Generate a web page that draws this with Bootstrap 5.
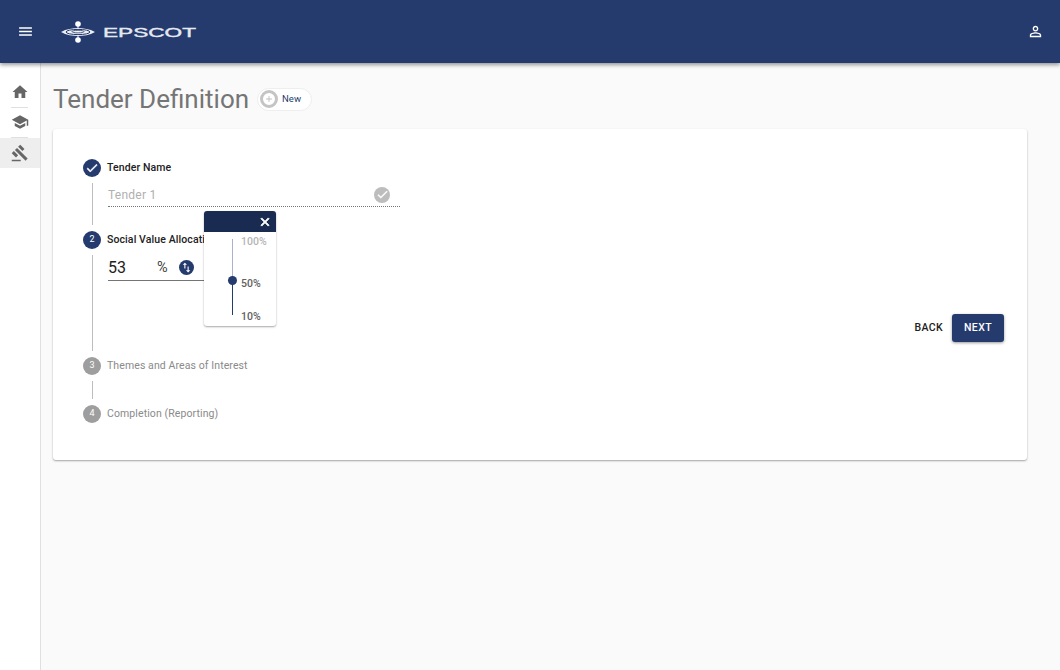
<!DOCTYPE html>
<html lang="en">
<head>
<meta charset="utf-8">
<title>Tender Definition</title>
<link href="https://cdn.jsdelivr.net/npm/bootstrap@5.3.0/dist/css/bootstrap.min.css" rel="stylesheet">
<style>
html,body{height:100%;overflow:hidden}
body{font-family:Roboto,"Liberation Sans",sans-serif;background:#fafafa;color:#212121}
.app-top{height:63px;background:#253b6e;box-shadow:0 2px 4px rgba(0,0,0,.4);position:relative;z-index:3;padding:0 16px 0 17px}
.top-ico{width:17px;height:17px;fill:#fff;display:block}
.brand-svg{display:block;margin-left:18px}
.brand-word{font-family:"Liberation Sans",sans-serif;font-size:12.5px;fill:#e6e9f0;stroke:#e6e9f0;stroke-width:.35px}
.app-shell{height:607px}
.side-rail{width:41px;flex:none;background:#fff;border-right:1px solid #e0e0e0;padding-top:14px}
.rail-item{height:30px;display:flex;align-items:center;justify-content:center}
.rail-item svg{width:18px;height:18px;fill:#666}
.rail-item.is-short{height:28px;padding-bottom:1px}
.rail-item.is-on{background:#eee}
.rail-sep{height:1px;background:#e0e0e0;margin:0 12px 0 11px}
.rail-sep.is-low{margin-top:1px}
.page-area{padding:21px 33px 0 12px;min-width:0}
.page-title{font-size:26px;line-height:30px;font-weight:400;color:#757575;margin:0}
.new-pill{width:55px;height:23px;border:1px solid #eee;border-radius:12px;background:#fff;padding:0 0 0 2px;margin-left:8px;font-size:9.5px;font-weight:400;color:#253b6e;gap:4px}
.new-pill i{width:18px;height:18px;flex:none;border-radius:50%;border:3px solid #c4c4c4;display:flex;align-items:center;justify-content:center}
.new-pill svg{width:10px;height:10px;fill:#bdbdbd}
.new-word{padding-top:1px}
.tender-card{height:331px;margin-top:15px;border:0;border-radius:3px;box-shadow:0 1px 2px rgba(0,0,0,.35);padding:30px 23px 0 30px}
.step-head{display:flex;align-items:center;height:18px;font-size:10.5px;font-weight:500;color:#212121;white-space:nowrap;letter-spacing:.1px}
.step-dot{width:18px;height:18px;flex:none;border-radius:50%;background:#253b6e;color:#fff;font-size:9px;font-weight:400;letter-spacing:0;display:flex;align-items:center;justify-content:center;margin-right:6px}
.step-dot svg{width:14px;height:14px;fill:#fff;stroke:#fff;stroke-width:1px}
.step-head.is-todo{color:#8a8a8a;font-weight:400;letter-spacing:.1px}
.step-head.is-todo .step-dot{background:#9e9e9e}
.step-body{margin:6px 0 6px 9px;border-left:1px solid #bdbdbd;padding-left:15px}
.name-field{width:292px;height:24px;border-bottom:1px dotted #757575;font-size:12px;letter-spacing:.25px;color:#b0b0b0}
.done-mark{width:16px;height:16px;border-radius:50%;background:#bdbdbd;display:flex;align-items:center;justify-content:center;margin-right:10px}
.done-mark svg{width:13px;height:13px;fill:#fff;stroke:#fff;stroke-width:1px}
.pct-field{width:130px;height:26px;border-bottom:1px solid #757575;font-size:16px;color:#212121;position:relative}
.pct-num{width:49px}
.pct-sign{font-size:14.5px;color:#424242;width:22px}
.swap-mark{width:15px;height:15px;border-radius:50%;background:#253b6e;display:flex;align-items:center;justify-content:center}
.swap-mark svg{width:13px;height:13px;fill:#fff}
.slide-pop{position:absolute;left:96px;top:-44px;width:72px;height:115px;background:#fff;border-radius:3px;box-shadow:0 1px 2px rgba(0,0,0,.35);overflow:hidden;z-index:2}
.slide-top{height:21px;background:#1a2b52;padding-right:4px}
.slide-top svg{width:14px;height:14px;fill:#fff;stroke:#fff;stroke-width:1.5px}
.slide-track{position:relative;height:94px}
.track-lo{position:absolute;left:28px;top:49px;width:1px;height:34px;background:#253b6e}
.track-hi{position:absolute;left:28px;top:7px;width:1px;height:42px;background:#a9b2c8}
.track-thumb{position:absolute;left:24px;top:44px;width:9px;height:9px;border-radius:50%;background:#253b6e}
.track-tag{position:absolute;left:37px;font-size:10.5px;line-height:12px;font-weight:500;color:#616161}
.track-tag.is-far{color:#b5b5b5}
.step-actions{gap:9px;margin-bottom:9px}
.back-btn{font-size:10.5px;font-weight:500;letter-spacing:.4px;color:#212121;padding:0;border:0;background:none}
.next-btn{width:52px;height:28px;padding:0;border:0;border-radius:3px;background:#253b6e;color:#fff;font-size:10.5px;font-weight:500;letter-spacing:.4px;box-shadow:0 1px 3px rgba(0,0,0,.4)}
</style>
</head>
<body>
<header class="app-top d-flex align-items-center">
  <svg class="top-ico" viewBox="0 0 24 24"><path d="M3 18h18v-2H3v2zm0-5h18v-2H3v2zm0-7v2h18V6H3z"/></svg>
  <svg class="brand-svg" width="146" height="26" viewBox="0 0 146 26" aria-label="EPSCOT">
    <circle cx="26" cy="5" r="2.8" fill="#fff"/><circle cx="26" cy="21" r="2.8" fill="#fff"/>
    <path d="M26 5v16" stroke="#fff" stroke-width="1"/>
    <path d="M9 13c5-3 12-4 17-4s12 1 17 4c-5 3-12 4-17 4S14 16 9 13z" fill="#fff" fill-opacity=".92"/>
    <ellipse cx="26" cy="13" rx="12" ry="2.6" fill="none" stroke="#253b6e" stroke-width="1"/>
    <ellipse cx="26" cy="12.6" rx="6" ry="1.3" fill="none" stroke="#253b6e" stroke-width=".8"/>
    <text class="brand-word" x="51" y="17.5" textLength="93" lengthAdjust="spacingAndGlyphs">EPSCOT</text>
  </svg>
  <svg class="top-ico ms-auto" viewBox="0 0 24 24"><path d="M12 5.9c1.16 0 2.1.94 2.1 2.1s-.94 2.1-2.1 2.1S9.9 9.16 9.9 8s.94-2.1 2.1-2.1m0 9c2.97 0 6.1 1.46 6.1 2.1v1.1H5.9V17c0-.64 3.13-2.1 6.1-2.1M12 4C9.79 4 8 5.79 8 8s1.79 4 4 4 4-1.79 4-4-1.79-4-4-4zm0 9c-2.67 0-8 1.34-8 4v3h16v-3c0-2.66-5.33-4-8-4z"/></svg>
</header>
<div class="app-shell d-flex">
  <nav class="side-rail">
    <div class="rail-item"><svg viewBox="0 0 24 24"><path d="M10 20v-6h4v6h5v-8h3L12 3 2 12h3v8z"/></svg></div>
    <div class="rail-sep"></div>
    <div class="rail-item is-short"><svg viewBox="0 0 24 24"><path d="M5 13.18v4L12 21l7-3.82v-4L12 17l-7-3.82zM12 3 1 9l11 6 9-4.91V17h2V9L12 3z"/></svg></div>
    <div class="rail-sep is-low"></div>
    <div class="rail-item is-on"><svg viewBox="0 0 24 24"><path d="M1 21h12v2H1zM5.245 8.07l2.83-2.827 14.14 14.142-2.828 2.828zM12.317 1l5.657 5.656-2.83 2.83-5.654-5.66zM3.825 9.485l5.657 5.657-2.828 2.828-5.657-5.657z"/></svg></div>
  </nav>
  <main class="page-area flex-grow-1">
    <div class="d-flex align-items-center">
      <h1 class="page-title">Tender Definition</h1>
      <button type="button" class="new-pill d-flex align-items-center"><i><svg viewBox="0 0 24 24"><path d="M19 13h-6v6h-2v-6H5v-2h6V5h2v6h6v2z"/></svg></i><span class="new-word">New</span></button>
    </div>
    <section class="card tender-card">
      <div class="step-head"><span class="step-dot"><svg viewBox="0 0 24 24"><path d="M9 16.17 4.83 12l-1.42 1.41L9 19 21 7l-1.41-1.41z"/></svg></span>Tender Name</div>
      <div class="step-body" style="height:42px">
        <div class="name-field d-flex align-items-center justify-content-between">
          <span>Tender 1</span>
          <span class="done-mark"><svg viewBox="0 0 24 24"><path d="M9 16.17 4.83 12l-1.42 1.41L9 19 21 7l-1.41-1.41z"/></svg></span>
        </div>
      </div>
      <div class="step-head"><span class="step-dot">2</span>Social Value Allocation</div>
      <div class="step-body d-flex justify-content-between" style="height:96px">
        <div class="pct-field d-flex align-items-center">
          <span class="pct-num">53</span>
          <span class="pct-sign">%</span>
          <span class="swap-mark"><svg viewBox="0 0 24 24"><path d="M16 17.01V10h-2v7.01h-3L15 21l4-3.99h-3zM9 3 5 6.99h3V14h2V6.99h3L9 3z"/></svg></span>
          <div class="slide-pop">
            <div class="slide-top d-flex align-items-center justify-content-end"><svg viewBox="0 0 24 24"><path d="M19 6.41 17.59 5 12 10.59 6.41 5 5 6.41 10.59 12 5 17.59 6.41 19 12 13.41 17.59 19 19 17.59 13.41 12z"/></svg></div>
            <div class="slide-track">
              <span class="track-hi"></span><span class="track-lo"></span><span class="track-thumb"></span>
              <span class="track-tag is-far" style="top:4px">100%</span>
              <span class="track-tag" style="top:46px">50%</span>
              <span class="track-tag" style="top:79px">10%</span>
            </div>
          </div>
        </div>
        <div class="step-actions d-flex align-items-center align-self-end">
          <button type="button" class="back-btn">BACK</button>
          <button type="button" class="next-btn">NEXT</button>
        </div>
      </div>
      <div class="step-head is-todo"><span class="step-dot">3</span>Themes and Areas of Interest</div>
      <div class="step-body" style="height:18px"></div>
      <div class="step-head is-todo"><span class="step-dot">4</span>Completion (Reporting)</div>
    </section>
  </main>
</div>
<script src="https://cdn.jsdelivr.net/npm/bootstrap@5.3.0/dist/js/bootstrap.bundle.min.js"></script>
</body>
</html>
